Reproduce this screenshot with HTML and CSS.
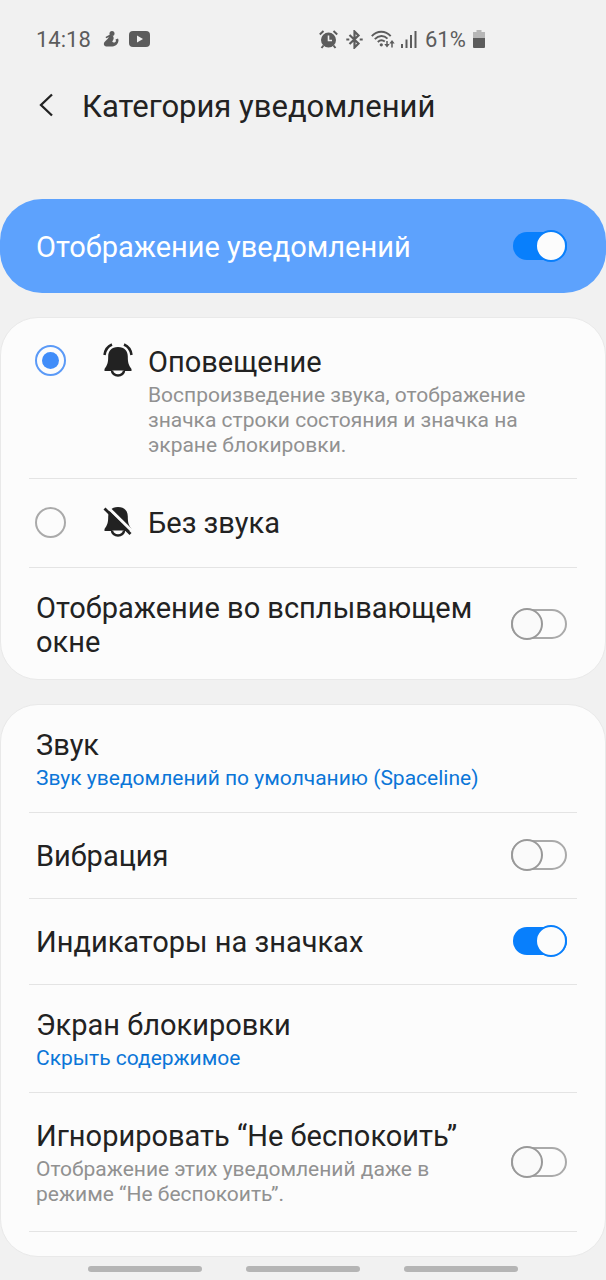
FILE: index.html
```html
<!DOCTYPE html>
<html lang="ru">
<head>
<meta charset="utf-8">
<meta name="viewport" content="width=device-width, initial-scale=1">
<title>Категория уведомлений</title>
<link rel="stylesheet" href="styles.css">
</head>
<body>
<div class="status">
  <div class="status-group">
    <span>14:18</span>
    <svg class="ico-duo" width="16" height="18" viewBox="0 0 16 18" fill="currentColor"><circle cx="9" cy="3.600" r="2.500"/><path d="M2.500 7 7 4.500l3 1.500c1.200 2 .8 3.500-.8 5.500.8 1.500 2.800 1.500 3.800-.5l-.5-1.500 2.500-1 .5 1.500c0 3.500-2.500 6-6 6.500H3C0 15.500.5 12.500 2.500 11L4.500 9l1.500-2-2.800 1.200z"/></svg>
    <svg width="21" height="16" viewBox="0 0 21 16"><rect width="21" height="16" rx="4" fill="currentColor"/><path d="M8 4.500v7l6-3.500z" fill="#f1f1f1"/></svg>
  </div>
  <div class="status-group status-right">
    <svg width="19" height="19" viewBox="0 0 19 19" fill="none" stroke="currentColor"><circle cx="9.500" cy="10" r="7.500" fill="currentColor" stroke="none"/><path d="M.8 4.500 4.500 1M18.200 4.500 14.500 1M4.500 15.500 2.500 18M14.500 15.500l2 2.500" stroke-width="2"/><path d="M9.500 5.500V10.500H13" stroke="#f1f1f1" stroke-width="1.600"/></svg>
    <svg width="17" height="19" viewBox="0 0 17 19" fill="none" stroke="currentColor" stroke-width="2.200"><path d="m3.500 5 9 8.500-4 4V1.500l4 4-9 8.500"/><path d="M.3 9.500h3M13.700 9.500h3"/></svg>
    <svg class="ico-wifi" width="24" height="19" viewBox="0 0 24 19" fill="none" stroke="currentColor" stroke-width="1.900"><path d="M.8 6.200C6 .2 14.500.2 19.700 6.200M3.800 9.200c4-4.200 9-4.200 12.700-.5M6.800 12c2.400-2.200 4.800-2.200 7-.4"/><circle cx="10.300" cy="14.800" r="1.600" fill="currentColor" stroke="none"/><path d="M16 11v4M21 12.500v5" stroke-width="1.500"/><path d="M13.300 14h5.400L16 17.500zM18.300 13.500h5.400L21 10z" fill="currentColor" stroke="none"/></svg>
    <svg width="16" height="18" viewBox="0 0 16 18" fill="currentColor"><path d="M0 14h2v4H0zM4.500 9.500h2V18h-2zM9 5h2v13H9zM13.500 1h2v17h-2z"/></svg>
    <span class="percent">61%</span>
    <svg width="12" height="18" viewBox="0 0 12 18"><path d="M3.500 0h5v2H12v6H0V2h3.500z" fill="#b7b7b7"/><path d="M0 8h12v9a1 1 0 0 1-1 1H1a1 1 0 0 1-1-1z" fill="currentColor"/></svg>
  </div>
</div>

<header class="header">
  <button class="back" type="button" aria-label="Назад"><svg width="14" height="24" viewBox="0 0 14 24" fill="none" stroke="currentColor" stroke-width="2.300"><path d="M13 1.500 2 12l11 10.500"/></svg></button>
  <h1 class="title">Категория уведомлений</h1>
</header>

<main>
  <label class="master">
    <span class="name">Отображение уведомлений</span>
    <input class="switch" type="checkbox" role="switch" checked>
  </label>

  <section class="card">
    <label class="row choice alert">
      <input class="radio" type="radio" name="mode" checked>
      <svg class="bell" width="30" height="34" viewBox="0 0 30 34"><path d="M15 4C8.500 4 5.200 8 5.200 13.500c0 6-.7 8.500-3.700 12.500V28h27V26c-3-4-3.700-6.500-3.700-12.500C24.800 8 21.500 4 15 4z" fill="currentColor"/><path d="M9 27.500a6 5 0 0 0 12 0" fill="#fcfcfc" stroke="currentColor" stroke-width="2.500"/><path d="M1.500 12C2 7.500 4.500 3.500 9 1.500M28.500 12C28 7.500 25.500 3.500 21 1.500" fill="none" stroke="currentColor" stroke-width="2.500"/></svg>
      <span class="text">
        <span class="name">Оповещение</span>
        <span class="note">Воспроизведение звука, отображение значка строки состояния и значка на экране блокировки.</span>
      </span>
    </label>
    <label class="row choice silent">
      <input class="radio" type="radio" name="mode">
      <svg class="bell" width="30" height="34" viewBox="0 0 30 34"><path d="M15 2C8.500 2 5.200 6 5.200 11.500c0 6-.7 8.500-3.700 12.500V26h27V24c-3-4-3.700-6.500-3.700-12.500C24.800 6 21.500 2 15 2z" fill="currentColor"/><path d="M9 25.500a6 5 0 0 0 12 0" fill="#fcfcfc" stroke="currentColor" stroke-width="2.500"/><path d="M3.500 1 31 28" stroke="#fcfcfc" stroke-width="3"/><path d="M1.500 3.500 27.500 29" stroke="currentColor" stroke-width="2.800"/></svg>
      <span class="name">Без звука</span>
    </label>
    <label class="row popup">
      <span class="name">Отображение во всплывающем окне</span>
      <input class="switch" type="checkbox" role="switch">
    </label>
  </section>

  <section class="card">
    <button class="row link sound" type="button">
      <span class="text"><span class="name">Звук</span><span class="value">Звук уведомлений по умолчанию (Spaceline)</span></span>
    </button>
    <label class="row single">
      <span class="name">Вибрация</span>
      <input class="switch" type="checkbox" role="switch">
    </label>
    <label class="row single">
      <span class="name">Индикаторы на значках</span>
      <input class="switch" type="checkbox" role="switch" checked>
    </label>
    <button class="row link" type="button">
      <span class="text"><span class="name">Экран блокировки</span><span class="value">Скрыть содержимое</span></span>
    </button>
    <label class="row dnd">
      <span class="text"><span class="name">Игнорировать “Не беспокоить”</span><span class="note">Отображение этих уведомлений даже в режиме “Не беспокоить”.</span></span>
      <input class="switch" type="checkbox" role="switch">
    </label>
    <div class="next"></div>
  </section>
</main>

<nav class="nav">
  <button type="button" aria-label="Последние"></button>
  <button type="button" aria-label="Главный экран"></button>
  <button type="button" aria-label="Назад"></button>
</nav>
</body>
</html>
```
FILE: styles.css
```css
*, *::before, *::after { box-sizing: border-box; }

body {
  margin: 0;
  background: #f1f1f1;
  color: #222;
  font-family: Roboto, sans-serif;
}

button {
  border: 0;
  padding: 0;
  background: none;
  color: inherit;
  font: inherit;
  text-align: left;
}

svg { display: block; flex: none; }

.status {
  display: grid;
  grid-template-columns: 283fr 287fr;
  padding: 23px 0 0 36px;
  color: #5c5c5c;
  font-size: 22px;
  line-height: 30px;
}

.status span { padding-top: 2px; }
.status-group { display: flex; align-items: center; gap: 10px; }
.ico-duo { margin-left: 2px; }
.status-right { gap: 8px; }
.ico-wifi { margin-right: -2px; }
.percent { margin-right: -1px; }

.header {
  display: flex;
  align-items: center;
  gap: 29px;
  padding: 32px 36px 0 39px;
}

.back { padding-bottom: 4px; }
.title { margin: 0; font-size: 31px; font-weight: 400; line-height: 40px; }

main {
  display: flex;
  flex-direction: column;
  gap: 24px;
  padding-top: 72px;
}

.master {
  display: flex;
  align-items: center;
  justify-content: space-between;
  height: 94px;
  padding: 0 39px 0 36px;
  border-radius: 42px;
  background: #5da2fd;
  color: #fff;
}

.card {
  padding: 0 28px;
  border: 1px solid #e9e9e9;
  border-radius: 38px;
  background: #fcfcfc;
}

.row {
  display: flex;
  align-items: center;
  justify-content: space-between;
  gap: 20px;
  width: 100%;
  padding: 0 10px 0 7px;
}

.row + .row, .next { border-top: 1px solid #e4e4e4; }

.text { display: flex; flex-direction: column; gap: 4px; }
.name { padding-top: 2px; font-size: 29px; line-height: 34px; }
.note, .value { font-size: 21px; line-height: 25px; }
.note { color: #919191; }
.value { color: #0b76d8; }

.choice { justify-content: flex-start; gap: 0; padding: 0 30px 0 6px; }
.alert { align-items: flex-start; padding-top: 25px; padding-bottom: 20px; }
.silent { height: 89px; padding-bottom: 2px; }
.popup { height: 112px; }
.single { height: 86px; padding-bottom: 2px; }
.link { height: 108px; }
.sound { height: 107px; }
.dnd { height: 139px; }
.next { height: 25px; }

.bell { margin: 0 15px 0 37px; }

.radio {
  appearance: none;
  display: grid;
  place-items: center;
  flex: none;
  width: 31px;
  height: 31px;
  margin: 0;
  border: 2px solid #aaa;
  border-radius: 50%;
}

.alert .radio { margin-top: 2px; }
.radio:checked { border-color: #5b9af7; }
.radio:checked::before {
  content: "";
  width: 17px;
  height: 17px;
  border-radius: 50%;
  background: #418df9;
}

.switch {
  appearance: none;
  display: grid;
  align-items: center;
  flex: none;
  width: 56px;
  height: 32px;
  margin: 0;
}

.switch::before, .switch::after { content: ""; grid-area: 1 / 1; }
.switch::before {
  height: 30px;
  border: 2px solid #aaa;
  border-radius: 15px;
}
.switch::after {
  width: 32px;
  height: 32px;
  border: 2px solid #999;
  border-radius: 50%;
  background: #fafafa;
}
.switch:checked::before { height: 28px; margin-left: 2px; border: 0; background: #087ffc; }
.switch:checked::after { justify-self: end; border-color: #087ffc; background: #fcfcfc; }

.nav {
  display: grid;
  grid-template-columns: repeat(3, 1fr);
  gap: 44px;
  padding: 9px 88px 0;
}

.nav button { height: 6px; border-radius: 3px; background: #b5b5b5; }
```
